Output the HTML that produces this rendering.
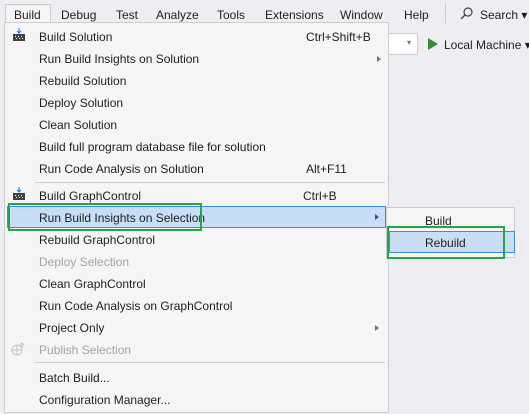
<!DOCTYPE html>
<html><head><style>
body{margin:0;width:529px;height:414px;background:#eeeef2;font-family:"Liberation Sans",sans-serif;font-size:12px;color:#1e1e1e;position:relative;overflow:hidden}
.a{position:absolute;white-space:nowrap}
.it{position:absolute;left:39px;white-space:nowrap;line-height:14px}
.dis{color:#a2a4a5}
.sep{position:absolute;left:35px;width:350px;height:1px;background:#ccced0}
.arr{position:absolute;width:0;height:0;border-top:3px solid transparent;border-bottom:3px solid transparent;border-left:4px solid #717171}
</style></head><body>
<div class="a" style="left:5px;top:4px;width:44px;height:19px;background:#f5f5f5;border:1px solid #ccced0;border-bottom:none"></div>
<div class="a" style="left:14px;top:8px">Build</div>
<div class="a" style="left:61px;top:8px">Debug</div>
<div class="a" style="left:116px;top:8px">Test</div>
<div class="a" style="left:156px;top:8px">Analyze</div>
<div class="a" style="left:217px;top:8px">Tools</div>
<div class="a" style="left:265px;top:8px">Extensions</div>
<div class="a" style="left:340px;top:8px">Window</div>
<div class="a" style="left:404px;top:8px">Help</div>
<div class="a" style="left:445px;top:3px;width:1px;height:20px;background:#ccced0"></div>
<svg class="a" style="left:460px;top:7px" width="13" height="13"><circle cx="8" cy="5" r="4" fill="none" stroke="#444" stroke-width="1.2"/><line x1="5" y1="8" x2="1" y2="12" stroke="#444" stroke-width="1.4"/></svg>
<div class="a" style="left:480px;top:8px">Search ▾</div>
<div class="a" style="left:386px;top:33px;width:30px;height:20px;background:#fff;border:1px solid #ccced0"></div>
<div class="a" style="left:407px;top:38px;font-size:8px;color:#717171">▾</div>
<div class="a" style="left:428px;top:38px;width:0;height:0;border-top:6px solid transparent;border-bottom:6px solid transparent;border-left:10px solid #388a34"></div>
<div class="a" style="left:444px;top:38px">Local Machine ▾</div>

<div class="a" style="left:4px;top:22px;width:383px;height:389px;background:#f5f5f5;border:1px solid #ccced0"></div>
<svg class="a" style="left:12px;top:28px" width="14" height="14"><path d="M1 6h12v7H1z" fill="#424242"/><path d="M3 8h1v1H3zm3 0h1v1H6zm3 0h1v1H9zM4 10h1v1H4zm3 0h1v1H7zm3 0h1v1h-1z" fill="#fff"/><path d="M7 0v5M5 3l2 2 2-2" stroke="#1e78d4" fill="none"/></svg>
<svg class="a" style="left:12px;top:187px" width="14" height="14"><path d="M1 6h12v7H1z" fill="#424242"/><path d="M3 8h1v1H3zm3 0h1v1H6zm3 0h1v1H9zM4 10h1v1H4zm3 0h1v1H7zm3 0h1v1h-1z" fill="#fff"/><path d="M7 0v5M5 3l2 2 2-2" stroke="#1e78d4" fill="none"/></svg>
<svg class="a" style="left:11px;top:342px" width="14" height="14"><circle cx="6" cy="8" r="5" fill="none" stroke="#c4c4c4"/><path d="M1 8h10M6 3v10M11 1v5M9 3l2-2 2 2" stroke="#c4c4c4" fill="none"/></svg>
<div class="it" style="top:30px">Build Solution</div><div class="a" style="left:306px;top:30px">Ctrl+Shift+B</div>
<div class="it" style="top:52px">Run Build Insights on Solution</div><div class="arr" style="left:377px;top:56px"></div>
<div class="it" style="top:74px">Rebuild Solution</div>
<div class="it" style="top:96px">Deploy Solution</div>
<div class="it" style="top:118px">Clean Solution</div>
<div class="it" style="top:140px">Build full program database file for solution</div>
<div class="it" style="top:162px">Run Code Analysis on Solution</div><div class="a" style="left:306px;top:162px">Alt+F11</div>
<div class="sep" style="top:182px"></div>
<div class="it" style="top:189px">Build GraphControl</div><div class="a" style="left:303px;top:189px">Ctrl+B</div>
<div class="a" style="left:7px;top:206px;width:377px;height:20px;background:#c9def5;border:1px solid #3d8ee0"></div>
<div class="it" style="top:211px">Run Build Insights on Selection</div><div class="arr" style="left:375px;top:214px;border-left-color:#1e5fa8"></div>
<div class="a" style="left:8px;top:203px;width:190px;height:24px;border:2px solid #22a74a"></div>
<div class="it" style="top:233px">Rebuild GraphControl</div>
<div class="it dis" style="top:255px">Deploy Selection</div>
<div class="it" style="top:277px">Clean GraphControl</div>
<div class="it" style="top:299px">Run Code Analysis on GraphControl</div>
<div class="it" style="top:321px">Project Only</div><div class="arr" style="left:375px;top:325px"></div>
<div class="it dis" style="top:343px">Publish Selection</div>
<div class="sep" style="top:362px"></div>
<div class="it" style="top:371px">Batch Build...</div>
<div class="it" style="top:393px">Configuration Manager...</div>

<div class="a" style="left:386px;top:207px;width:127px;height:49px;background:#f5f5f5;border:1px solid #ccced0"></div>
<div class="a" style="left:425px;top:214px">Build</div>
<div class="a" style="left:389px;top:231px;width:124px;height:20px;background:#c9def5;border:1px solid #3d8ee0"></div>
<div class="a" style="left:425px;top:236px">Rebuild</div>
<div class="a" style="left:387px;top:226px;width:114px;height:29px;border:2px solid #22a74a"></div>
</body></html>
